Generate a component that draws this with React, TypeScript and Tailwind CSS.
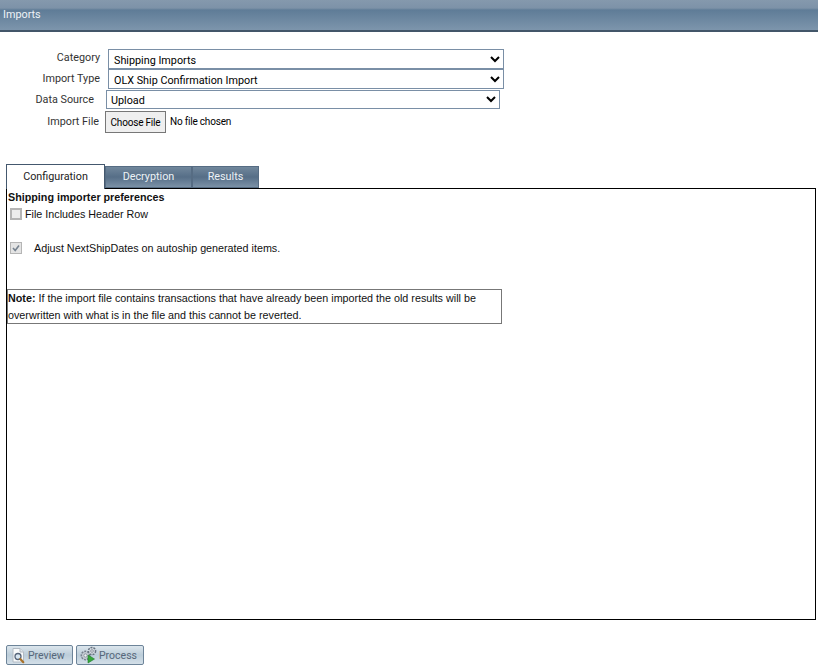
import React from 'react';

const uiFont = "font-['Roboto',sans-serif]";
const bodyFont = "font-['Liberation_Sans',Arial,sans-serif]";

function PreviewIcon() {
  return (
    <svg width="17" height="17" viewBox="0 0 17 17" className="shrink-0">
      <path d="M3 1.500h7L13.500 5v10H3z" fill="#f8fafb" stroke="#b2bac3" />
      <path d="M10 1.500V5h3.500" fill="#dfe5ea" stroke="#b2bac3" />
      <circle cx="8" cy="9.500" r="3" fill="#d7e6f1" stroke="#56657a" strokeWidth="1.300" />
      <path d="M10.300 12l3 3.200" stroke="#a8722a" strokeWidth="2.200" strokeLinecap="round" />
    </svg>
  );
}

function ProcessIcon() {
  return (
    <svg width="18" height="18" viewBox="0 0 18 18" className="shrink-0">
      <circle cx="5.500" cy="9.500" r="4.200" fill="#c3cad2" stroke="#76818e" strokeWidth="1.500" strokeDasharray="2 1" />
      <circle cx="5.500" cy="9.500" r="1.600" fill="#f1f3f5" stroke="#76818e" strokeWidth="0.700" />
      <circle cx="12" cy="5" r="3.600" fill="#d3d9df" stroke="#677380" strokeWidth="1.500" strokeDasharray="2 1" />
      <circle cx="12" cy="5" r="1.300" fill="#f1f3f5" stroke="#677380" strokeWidth="0.700" />
      <path d="M8 9l6.500 4L8 17z" fill="#35a83b" stroke="#1f7a2a" strokeWidth="0.600" />
    </svg>
  );
}

function Tab({ label, active, className }: { label: string; active?: boolean; className: string }) {
  if (active) {
    return (
      <div className={`h-[25px] mb-[-1px] relative z-10 bg-white border border-[#44586e] border-b-0 flex items-center justify-center text-[10.800px] text-[#222] ${className}`}>
        {label}
      </div>
    );
  }
  return (
    <div className={`h-[22px] border border-[#566c83] bg-gradient-to-b from-[#71879c] via-[#566e87] to-[#7b91a6] flex items-center justify-center text-[10.800px] text-[#edf2f6] ${className}`}>
      {label}
    </div>
  );
}

function ActionButton({ icon, label, className }: { icon: React.ReactNode; label: string; className: string }) {
  return (
    <button className={`h-[20px] flex items-center pl-[3px] rounded-[2px] border border-[#6d8499] bg-gradient-to-b from-[#dce6ed] via-[#bccdd9] to-[#d3dfe8] text-[10.500px] text-[#56677a] ${uiFont} ${className}`}>
      {icon}
      <span className="ml-[1px] pt-[2px]">{label}</span>
    </button>
  );
}

export default function App() {
  return (
    <div className="w-[818px] h-[669px] bg-white overflow-hidden">
      {/* Header */}
      <div className="h-[32px] border-b-2 border-[#435669] bg-[linear-gradient(to_bottom,#8599ad_0,#7d92a8_8px,#5f7c97_10px,#7d95ac_30px)] flex items-center pl-[3px]">
        <span className={`text-[10.800px] text-[#eef3f7] ${uiFont}`}>Imports</span>
      </div>

      {/* Import form */}
      <div className={`pt-[17px] text-[10.800px] text-[#333] ${uiFont}`}>
        <div className="flex h-[20px]">
          <label className="w-[100px] text-right leading-[17px]">Category</label>
          <select defaultValue="a" className="ml-[8px] w-[396px] h-[20px] border border-[#7a8fa6] text-black text-[10.800px] pl-[1px] pt-[3px]">
            <option value="a">Shipping Imports</option>
          </select>
        </div>
        <div className="flex h-[21px]">
          <label className="w-[100px] text-right leading-[19px]">Import Type</label>
          <select defaultValue="a" className="ml-[8px] w-[396px] h-[20px] border border-[#7a8fa6] text-black text-[10.800px] pl-[1px] pt-[3px]">
            <option value="a">OLX Ship Confirmation Import</option>
          </select>
        </div>
        <div className="flex h-[20px]">
          <label className="w-[94px] text-right leading-[19px]">Data Source</label>
          <select defaultValue="a" className="ml-[12px] w-[394px] h-[19px] border border-[#7a8fa6] text-black text-[10.800px] pt-[2px]">
            <option value="a">Upload</option>
          </select>
        </div>
        <div className="flex items-center h-[23px]">
          <label className="w-[99px] text-right pt-[1px]">Import File</label>
          <button className="ml-[6px] w-[61px] h-[22px] border border-[#777] bg-[#efefef] text-[10px] tracking-[-0.2px] pt-[1px] text-black">Choose File</button>
          <span className="ml-[4px] text-[10px] tracking-[-0.2px] text-black">No file chosen</span>
        </div>
      </div>

      {/* Tabs */}
      <div className={`mt-[31px] ml-[6px] flex items-end h-[24px] ${uiFont}`}>
        <Tab label="Configuration" active className="w-[99px]" />
        <Tab label="Decryption" className="w-[87px]" />
        <Tab label="Results" className="w-[67px]" />
      </div>

      {/* Panel */}
      <div className={`ml-[6px] w-[810px] h-[432px] border border-black text-[10.750px] text-[#111] ${bodyFont}`}>
        <div className="pl-[1px] pt-[1px] font-bold leading-[14px]">Shipping importer preferences</div>
        <div className="flex items-center h-[18px] pl-[3px] mt-[1px]">
          <span className="w-[12px] h-[12px] border-2 border-[#b4b4b4] bg-[#ececec]" />
          <span className="ml-[3px]">File Includes Header Row</span>
        </div>
        <div className="flex items-center h-[18px] pl-[3px] mt-[16px]">
          <span className="w-[12px] h-[12px] border border-[#b5b5b5] bg-[#e4e4e4] flex items-center justify-center">
            <svg width="10" height="10" viewBox="0 0 10 10">
              <path d="M2 5l2.200 2.500L8 2.500" fill="none" stroke="#76828f" strokeWidth="1.600" />
            </svg>
          </span>
          <span className="ml-[12px]">Adjust NextShipDates on autoship generated items.</span>
        </div>
        <div className="mt-[32px] w-[495px] h-[35px] border border-[#777] leading-[17px]">
          <b>Note:</b> If the import file contains transactions that have already been imported the old results will be overwritten with what is in the file and this cannot be reverted.
        </div>
      </div>

      {/* Actions */}
      <div className="mt-[25px] ml-[6px] flex gap-[3px]">
        <ActionButton icon={<PreviewIcon />} label="Preview" className="w-[67px]" />
        <ActionButton icon={<ProcessIcon />} label="Process" className="w-[68px]" />
      </div>
    </div>
  );
}
